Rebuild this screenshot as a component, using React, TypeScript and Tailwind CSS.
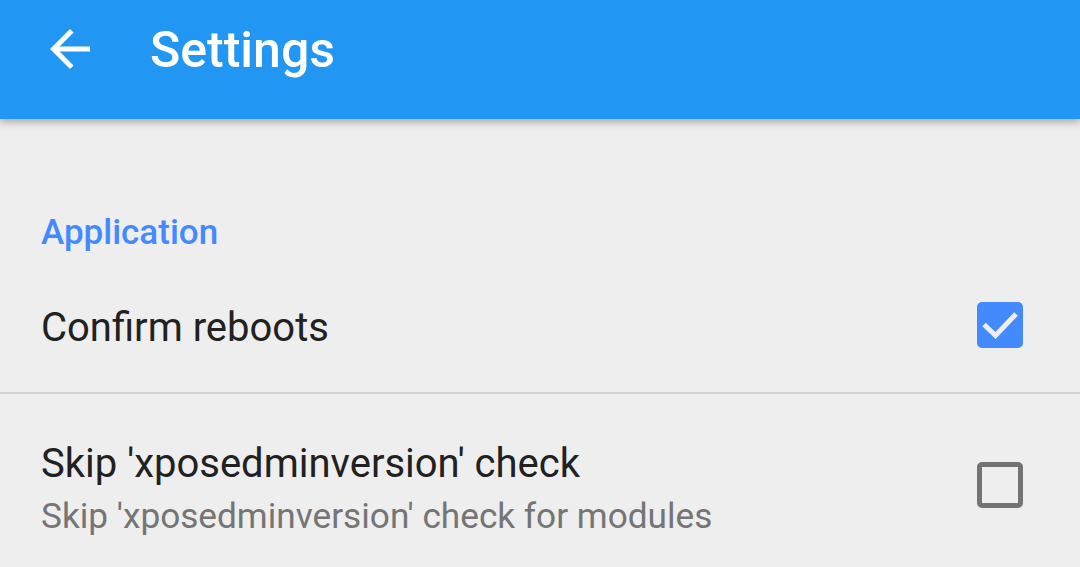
import React from "react";

const font = { fontFamily: "Roboto, 'Noto Sans', sans-serif" };

const BackArrow = () => (
  <svg width="60" height="60" viewBox="0 0 24 24" fill="white">
    <path d="M20 11H7.83l5.59-5.59L12 4l-8 8 8 8 1.41-1.41L7.83 13H20v-2z" />
  </svg>
);

const CheckBox = ({ checked }: { checked: boolean }) =>
  checked ? (
    <div className="w-[46px] h-[46px] rounded-[5px] bg-[#448aff] shrink-0">
      <svg width="46" height="46" viewBox="0 0 46 46">
        <path
          d="M7 22.5 L18.5 33.5 L39 12"
          stroke="#eeeeee"
          strokeWidth="5"
          fill="none"
        />
      </svg>
    </div>
  ) : (
    <div className="w-[46px] h-[46px] rounded-[5px] border-[5px] border-[#737373] shrink-0" />
  );

export default function App() {
  return (
    <div className="w-[1080px] h-[567px] overflow-hidden bg-[#eeeeee]" style={font}>
      <div className="relative z-10 h-[119px] bg-[#2196f3] flex items-start shadow-[0_3px_8px_rgba(0,0,0,0.3)]">
        <div className="ml-[40px] mt-[19px]">
          <BackArrow />
        </div>
        <h1 className="ml-[50px] mt-[20px] text-[50px] leading-[60px] font-medium text-white">
          Settings
        </h1>
      </div>

      <div className="pt-[90px]">
        <h2 className="pl-[41px] text-[35px] leading-[48px] font-medium text-[#448aff]">
          Application
        </h2>

        <div className="h-[135px] flex items-center justify-between pl-[41px] pr-[57px]">
          <span className="mt-[6px] text-[40px] leading-[48px] text-[#212121]">Confirm reboots</span>
          <CheckBox checked />
        </div>

        <div className="h-[2px] bg-[#d2d2d2]" />

        <div className="flex items-start justify-between pl-[41px] pr-[57px] pt-[46px]">
          <div className="flex flex-col gap-[4px]">
            <span className="text-[40px] leading-[48px] text-[#212121]">
              Skip 'xposedminversion' check
            </span>
            <span className="text-[35.2px] leading-[48px] text-[#757575]">
              Skip 'xposedminversion' check for modules
            </span>
          </div>
          <div className="mt-[22px]">
            <CheckBox checked={false} />
          </div>
        </div>
      </div>
    </div>
  );
}
